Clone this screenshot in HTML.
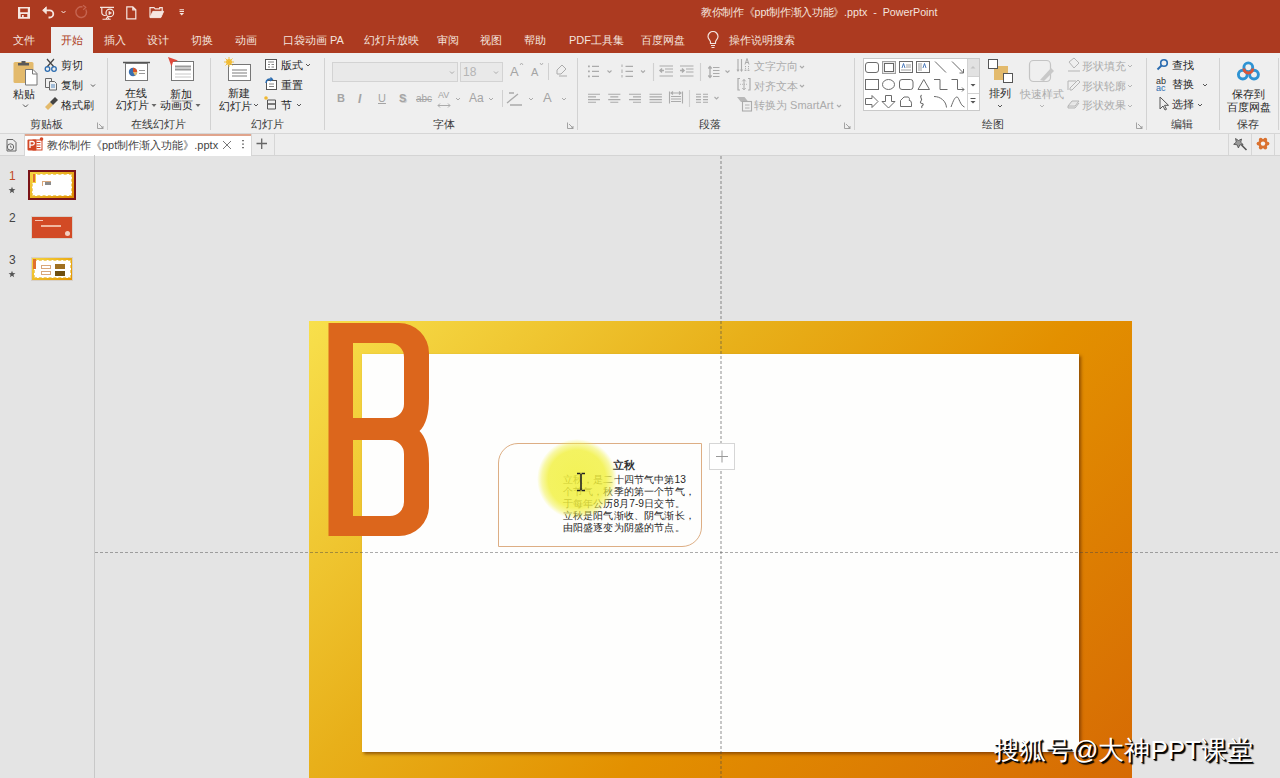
<!DOCTYPE html>
<html><head><meta charset="utf-8">
<style>
*{margin:0;padding:0;box-sizing:border-box}
html,body{width:1280px;height:778px;overflow:hidden;background:#E4E4E4;font-family:"Liberation Sans",sans-serif;position:relative}
.a{position:absolute}
.t{position:absolute;white-space:nowrap;line-height:1}
#title{left:0;top:0;width:1280px;height:53px;background:#AC3A20}
#ribbon{left:0;top:53px;width:1280px;height:81px;background:#EFEFEF;border-bottom:1px solid #D6D6D6}
#doctabs{left:0;top:134px;width:1280px;height:22px;background:#EDEDED;border-bottom:1px solid #D4D4D4}
.tab{color:#F4E3DE;font-size:11px;top:35px}
.sep{position:absolute;width:1px;background:#D2D2D2}
.gl{position:absolute;font-size:11px;color:#3A3A3A;top:119px;white-space:nowrap;line-height:1}
.rb{position:absolute;font-size:11px;color:#262626;white-space:nowrap;line-height:1}
.rb.dis{color:#ABABAB}
.k{display:inline-block;width:1em;text-align:center;text-indent:0}
</style></head>
<body>
<div id="title" class="a"></div>
<div id="ribbon" class="a"></div>
<div id="doctabs" class="a"></div>

<!-- active tab -->
<div class="a" style="left:51px;top:27px;width:42px;height:27px;background:#EFEFEF"></div>
<div class="t tab" style="left:13px"><span class="k">文</span><span class="k">件</span></div>
<div class="t tab" style="left:61px;color:#AC3A20"><span class="k">开</span><span class="k">始</span></div>
<div class="t tab" style="left:104px"><span class="k">插</span><span class="k">入</span></div>
<div class="t tab" style="left:147px"><span class="k">设</span><span class="k">计</span></div>
<div class="t tab" style="left:191px"><span class="k">切</span><span class="k">换</span></div>
<div class="t tab" style="left:235px"><span class="k">动</span><span class="k">画</span></div>
<div class="t tab" style="left:283px"><span class="k">口</span><span class="k">袋</span><span class="k">动</span><span class="k">画</span> PA</div>
<div class="t tab" style="left:364px"><span class="k">幻</span><span class="k">灯</span><span class="k">片</span><span class="k">放</span><span class="k">映</span></div>
<div class="t tab" style="left:437px"><span class="k">审</span><span class="k">阅</span></div>
<div class="t tab" style="left:480px"><span class="k">视</span><span class="k">图</span></div>
<div class="t tab" style="left:524px"><span class="k">帮</span><span class="k">助</span></div>
<div class="t tab" style="left:569px">PDF<span class="k">工</span><span class="k">具</span><span class="k">集</span></div>
<div class="t tab" style="left:641px"><span class="k">百</span><span class="k">度</span><span class="k">网</span><span class="k">盘</span></div>
<div class="t tab" style="left:729px"><span class="k">操</span><span class="k">作</span><span class="k">说</span><span class="k">明</span><span class="k">搜</span><span class="k">索</span></div>
<div class="t" style="left:701px;top:7px;font-size:10.7px;color:#F4E3DE"><span class="k">教</span><span class="k">你</span><span class="k">制</span><span class="k">作</span><span class="k">《</span>ppt<span class="k">制</span><span class="k">作</span><span class="k">渐</span><span class="k">入</span><span class="k">功</span><span class="k">能</span><span class="k">》</span>.pptx&nbsp;&nbsp;-&nbsp;&nbsp;PowerPoint</div>


<!-- QAT -->
<svg class="a" style="left:0;top:0" width="200" height="26" viewBox="0 0 200 26" fill="none" stroke="#F6E6E0" stroke-width="1.5">
 <path fill-rule="evenodd" fill="#F6E6E0" stroke="none" d="M18 6.9h12v11.8h-12z M20.2 8.6h7.6v3.7h-7.6z M20.7 14.1h6.6v2.9h-6.6z"/><rect x="22" y="15" width="1.7" height="2" fill="#F6E6E0" stroke="none"/>
 <path d="M42.6 10.3l3.7-3.5v7z" fill="#F6E6E0" stroke="#F6E6E0" stroke-width="0.8" stroke-linejoin="round"/><path d="M45.5 10.3h4.2a3.6 3.6 0 0 1 0 7.2h-1.2" stroke-width="1.8"/>
 <path d="M61.5 11l2 2 2-2" stroke-width="1"/>
 <path d="M85.8 9.5A5.3 5.3 0 1 1 82.5 7" stroke="#C56450" stroke-width="1.4"/><path d="M83 5.2l2.8 2.2-2.6 2.4" stroke="#C56450" stroke-width="1.2"/>
 <path d="M100 7.4h14" stroke-width="1.3"/><path d="M101.8 7.5v5a3 3 0 0 0 3 3h1" stroke-width="1.2"/><circle cx="109.8" cy="12.9" r="3.8" stroke-width="1.2"/><path d="M108.9 11.2v3.5l2.7-1.75z" fill="#F6E6E0" stroke-width="0.5"/><path d="M102.5 19.2h8.2M106 19l1.5-2 1.5 2" stroke-width="1.1"/>
 <path d="M126.8 6.8h6l3 3v9h-9z M132.8 6.8v3h3" stroke-width="1.2"/>
 <path d="M150 17.2v-9.5h4l1.2 1.2h4.5v-1.2h2.5v3.5" stroke-width="1.2"/><path d="M150 17.6l2.8-6.2h10.8l-2.8 6.2z" fill="#F6E6E0" stroke-width="1"/>
 <path d="M179.5 9.8h4.5M179.5 11.5h4.5" stroke-width="1.1"/><path d="M179.5 13h4.5l-2.25 2.5z" fill="#F6E6E0" stroke="none"/>
</svg>

<svg class="a" style="left:706px;top:31px" width="14" height="18" viewBox="0 0 14 18" fill="none" stroke="#F4E3DE" stroke-width="1.2"><path d="M4.5 12.5v-1.5c0-1.5-2.5-3-2.5-5.5a5 5 0 0 1 10 0c0 2.5-2.5 4-2.5 5.5v1.5z M5 14.5h4M5.5 16.5h3"/></svg>
<!-- ribbon group separators -->
<div class="sep" style="left:107px;top:58px;height:72px"></div>
<div class="sep" style="left:210px;top:58px;height:72px"></div>
<div class="sep" style="left:324px;top:58px;height:72px"></div>
<div class="sep" style="left:577px;top:58px;height:72px"></div>
<div class="sep" style="left:854px;top:58px;height:72px"></div>
<div class="sep" style="left:1146px;top:58px;height:72px"></div>
<div class="sep" style="left:1219px;top:58px;height:72px"></div>
<div class="sep" style="left:1278px;top:58px;height:72px"></div>


<!-- ribbon icons -->
<svg class="a" style="left:0;top:53px" width="1280" height="80" viewBox="0 53 1280 80" fill="none">
 <!-- paste -->
 <rect x="13.5" y="62" width="20" height="21" rx="1.5" fill="#E3BA6C"/>
 <path d="M18 65.5h11v-2.5h-3.5v-2h-4v2H18z" fill="#5A5A5A"/>
 <path d="M25.5 69.5h7.5l4 4v11.5h-11.5z" fill="#fff" stroke="#777" stroke-width="1"/>
 <path d="M32.5 69.5v4.5h4.5" stroke="#777" stroke-width="1"/>
 <path d="M23 104.5l2.5 2.5 2.5-2.5" stroke="#555" stroke-width="1"/>
 <!-- scissors -->
 <path d="M47 59l7 8M54 59l-7 8" stroke="#444" stroke-width="1.2"/>
 <circle cx="47.5" cy="69" r="2.3" stroke="#2B6CB0" stroke-width="1.3"/><circle cx="54" cy="69" r="2.3" stroke="#2B6CB0" stroke-width="1.3"/>
 <!-- copy -->
 <path d="M45.5 78.5h6v9h-6z" stroke="#666" stroke-width="1"/><path d="M49.5 81.5h5l2 2v6.5h-7z" fill="#F1F1F1" stroke="#666" stroke-width="1"/>
 <path d="M51 85h4M51 87h4" stroke="#2B6CB0" stroke-width="0.8"/>
 <path d="M91 84.5l2 2 2-2" stroke="#555" stroke-width="1"/>
 <!-- format painter -->
 <path d="M45 107l5-5 3 3-5 5z" fill="#E3BA6C"/><path d="M50 102l5-5 3 3-5 5z" fill="#444"/>
 <!-- online slide icon -->
 <path d="M123 62.5h27" stroke="#555" stroke-width="1.5"/>
 <rect x="125.5" y="63.5" width="22" height="17" fill="#fff" stroke="#777" stroke-width="1"/>
 <circle cx="133" cy="72" r="4.2" fill="#3B6FB0"/><path d="M133 72v-4.2a4.2 4.2 0 0 1 4.2 4.2z" fill="#D9532A"/><path d="M133 72h4.2a4.2 4.2 0 0 1-2.2 3.7z" fill="#E3BA6C"/>
 <path d="M139 70.5h6M139 73.5h6" stroke="#999" stroke-width="1"/>
 <!-- new animation page -->
 <rect x="171.5" y="61.5" width="22" height="19" fill="#fff" stroke="#777" stroke-width="1"/>
 <path d="M175 66.5h16M175 69.5h16" stroke="#9A9A9A" stroke-width="2"/><path d="M175 74h16M175 77h16" stroke="#C8C8C8" stroke-width="1"/>
 <path d="M168 57l10 3.5-5 1.5-1.5 4.5z" fill="#E0483A"/>
 <!-- new slide -->
 <rect x="228.5" y="64.5" width="22" height="16" fill="#fff" stroke="#777" stroke-width="1"/>
 <path d="M232 70h15M232 73h15M232 76h15" stroke="#A8A8A8" stroke-width="1.5"/>
 <circle cx="229" cy="62" r="3" fill="#F4C542"/><path d="M229 57v10M224 62h10M225.5 58.5l7 7M232.5 58.5l-7 7" stroke="#F0B830" stroke-width="0.9"/>
 <path d="M254 104l2 2 2-2" stroke="#555" stroke-width="1"/>
 <!-- layout -->
 <rect x="265.5" y="59.5" width="11" height="10" stroke="#555" stroke-width="1" fill="#fff"/><path d="M268 62h6M268 64.5h2M271.5 64.5h2.5M268 67h2M271.5 67h2.5" stroke="#777" stroke-width="0.9"/>
 <path d="M306 64l2 2 2-2" stroke="#555" stroke-width="1"/>
 <!-- reset -->
 <rect x="266.5" y="80.5" width="10" height="9" stroke="#555" stroke-width="1" fill="#fff"/><path d="M269 84h5M269 86.5h5" stroke="#777" stroke-width="0.9"/>
 <path d="M266 83a4 4 0 0 1 6-3.5" stroke="#2B6CB0" stroke-width="1.5"/><path d="M270.5 77.5l2 2-2.5 1.5" stroke="#2B6CB0" stroke-width="1.2"/>
 <!-- section -->
 <path d="M267.5 100h8v4h-8zM267.5 104h8v5h-8z" stroke="#555" stroke-width="1"/>
 <circle cx="266" cy="98" r="1.8" fill="#F0B830"/>
 <path d="M297 104l2 2 2-2" stroke="#555" stroke-width="1"/>
 <!-- launchers -->
 <g stroke="#9A9A9A" stroke-width="0.9"><path d="M97.5 122.5v6h6M99 124l4 4M101 128h2v-2"/>
 <path d="M567.5 122.5v6h6M569 124l4 4M571 128h2v-2"/>
 <path d="M844.5 122.5v6h6M846 124l4 4M848 128h2v-2"/>
 <path d="M1136.5 122.5v6h6M1138 124l4 4M1140 128h2v-2"/></g>
</svg>


<!-- font group -->
<div class="a" style="left:332px;top:62px;width:126px;height:20px;background:#E9E9E9;border:1px solid #D3D3D3"></div>
<div class="a" style="left:460px;top:62px;width:43px;height:20px;background:#E9E9E9;border:1px solid #D3D3D3"></div>
<div class="rb dis" style="left:463px;top:66px;font-size:12px;color:#B4B4B4">18</div>
<div class="rb dis" style="left:337px;top:93px;font-size:11px;font-weight:bold;color:#A4A4A4">B</div>
<div class="rb dis" style="left:358px;top:93px;font-size:12px;font-style:italic;font-weight:bold;color:#A4A4A4">I</div>
<div class="rb dis" style="left:378px;top:93px;font-size:11px;text-decoration:underline;color:#A4A4A4">U</div>
<div class="rb dis" style="left:399px;top:93px;font-size:11px;font-weight:bold;color:#A4A4A4;text-shadow:1px 1px 0 #CFCFCF">S</div>
<div class="rb dis" style="left:416px;top:94px;font-size:10px;color:#A4A4A4;text-decoration:line-through">abc</div>
<div class="rb dis" style="left:438px;top:91px;font-size:9px;color:#A4A4A4">AV</div>
<div class="rb dis" style="left:469px;top:92px;font-size:12px;color:#A4A4A4">Aa</div>
<div class="rb dis" style="left:543px;top:91px;font-size:13px;color:#A4A4A4">A</div>
<div class="rb dis" style="left:510px;top:65px;font-size:13px;color:#A4A4A4">A</div>
<div class="rb dis" style="left:531px;top:67px;font-size:11px;color:#A4A4A4">A</div>
<svg class="a" style="left:0;top:53px" width="1280" height="80" viewBox="0 53 1280 80" fill="none" stroke="#ABABAB" stroke-width="1">
 <path d="M450 71.5l2 2 2-2M494 71.5l2 2 2-2"/>
 <path d="M520 65l1.5-2 1.5 2M540 63l1.5 2 1.5-2" stroke-width="0.9"/>
 <path d="M548.5 63v17" stroke="#D0D0D0"/>
 <path d="M557 70l5-5 4 4-5 5h-4z M559 76h8" />
 <path d="M438 105.5h12M440 103.5l-2 2 2 2M448 103.5l2 2-2 2"/>
 <path d="M456 98l2 2 2-2M489 98l2 2 2-2M529 98l2 2 2-2M562 98l2 2 2-2"/>
 <path d="M502.5 90v17" stroke="#D0D0D0"/>
 <path d="M509 93h5M507 103l11-9M510 105h12" stroke-width="1.3"/>
</svg>
<!-- paragraph icons -->
<svg class="a" style="left:0;top:53px" width="1280" height="80" viewBox="0 53 1280 80" fill="none" stroke="#ABABAB" stroke-width="1.1">
 <path d="M588 66.3h1.8M588 71.3h1.8M588 76.3h1.8" stroke-width="1.8"/><path d="M592 66.3h7M592 71.3h7M592 76.3h7" stroke-width="1.3"/>
 <path d="M607.5 70.5l2 2 2-2M641 70.5l2 2 2-2M725.5 70.5l2 2 2-2M714.5 97l2 2 2-2"/>
 <path d="M622 64.5v2.5M622 69.5v3.5M622 75v2.5" stroke-width="1"/><path d="M625.5 66.3h7.5M625.5 71.3h7.5M625.5 76.3h7.5" stroke-width="1.3"/>
 <path d="M653.5 63v18M700.5 63v18M689.5 90v17" stroke="#D0D0D0"/>
 <path d="M659.5 66h13.5M665 69h8M665 72h8M659.5 76h13.5" stroke-width="1.2"/><path d="M660 70.5h4M662 68.5l-2 2 2 2" stroke-width="1.5"/>
 <path d="M680 66h13.5M686 69h7.5M686 72h7.5M680 76h13.5" stroke-width="1.2"/><path d="M680 70.5h4M682 68.5l2 2-2 2" stroke-width="1.5"/>
 <path d="M710 67v10M708.3 68.5l1.7-2 1.7 2M708.3 75.5l1.7 2 1.7-2" stroke-width="1.3"/><path d="M713 67.5h6.5M713 70.5h6.5M713 73.5h6.5M713 76.5h6.5" stroke-width="1.1"/>
 <path d="M588 94.2h12M588 96.9h8M588 99.6h12M588 102.3h8"/>
 <path d="M608.2 94.2h12.2M610.3 96.9h8M608.2 99.6h12.2M610.3 102.3h8"/>
 <path d="M629 94.2h12M633 96.9h8M629 99.6h12M633 102.3h8"/>
 <path d="M649.5 94.2h12.4M649.5 96.9h12.4M649.5 99.6h12.4M649.5 102.3h12.4"/>
 <path d="M669.5 91.5v12M682.5 91.5v12M671 93h10M673 91.5l-2 1.5 2 1.5M679 91.5l2 1.5-2 1.5M671 96.5h10M671 99h10M671 101.5h10" stroke-width="1.1"/>
 <path d="M696 94.2h5M696 96.9h5M696 99.6h5M696 102.3h5M703 94.2h5M703 96.9h5M703 99.6h5M703 102.3h5"/>
 <path d="M738 59v12M741.5 59v12M737 69.5l1 1.5 1-1.5M740.5 69.5l1 1.5 1-1.5" stroke-width="1.1"/>
 <path d="M745 64.5l2-6 2 6M745.7 62.5h2.6" stroke-width="1"/><path d="M745.5 66v5M748.5 66v5" stroke-width="1" stroke-dasharray="1.2 1"/><path d="M744.5 69.8l1 1.2 1-1.2M747.5 69.8l1 1.2 1-1.2" stroke-width="0.9"/>
 <path d="M740 78.5h-2v11.5h2M748 78.5h2v11.5h-2" stroke-width="1.2"/><path d="M744 79.5v10M742.3 81.3l1.7-1.8 1.7 1.8M742.3 88l1.7 1.8 1.7-1.8" stroke-width="1"/><path d="M740 84.3h8" stroke-width="0.8" stroke-dasharray="1 1"/>
 <path d="M737 97h7.5l4 5h-7.5z" fill="#B8B8B8" stroke="none"/><rect x="742.5" y="101.5" width="9" height="9.5" fill="#EFEFEF" stroke-width="1.1"/><path d="M745 105h4.5M745 108h4.5" stroke-width="0.9"/>
 <path d="M800 66l2 2 2-2M800 85l2 2 2-2M837 105l2 2 2-2"/>
</svg>
<!-- drawing group -->
<div class="a" style="left:863px;top:58px;width:117px;height:53px;background:#fff;border:1px solid #C9C9C9"></div>
<div class="a" style="left:967px;top:59px;width:12px;height:17px;background:#E2E2E2;border-left:1px solid #D2D2D2"></div>
<div class="a" style="left:967px;top:76px;width:12px;height:17px;border-left:1px solid #D2D2D2;border-top:1px solid #D2D2D2"></div>
<div class="a" style="left:967px;top:93px;width:12px;height:17px;border-left:1px solid #D2D2D2;border-top:1px solid #D2D2D2"></div>
<svg class="a" style="left:0;top:53px" width="1280" height="80" viewBox="0 53 1280 80" fill="none" stroke="#6B6B6B" stroke-width="1">
 <rect x="865.5" y="62.5" width="13" height="10" rx="2.5"/>
 <rect x="882.5" y="61.5" width="13" height="12" fill="#E8E8E8" stroke="#A0A0A0"/><rect x="884.5" y="63.5" width="9" height="8" fill="#fff" stroke="#666"/>
 <rect x="899.5" y="61.5" width="13" height="11"/><path d="M902 68l1.5-4.5 1.5 4.5" stroke="#3A6DB5" stroke-width="0.9"/><path d="M906 65h5M906 67h5M901 70h10" stroke="#888" stroke-width="0.8"/>
 <rect x="916.5" y="61.5" width="13" height="11"/><path d="M919 63v8M921 63v8" stroke="#888" stroke-width="0.8"/><path d="M923 68l1.5-4.5 1.5 4.5" stroke="#3A6DB5" stroke-width="0.9"/>
 <path d="M935 61.5l11 11M952 61.5l11.5 11.5M963.5 69v4h-4"/>
 <rect x="865.5" y="79.5" width="13" height="10"/>
 <ellipse cx="888.5" cy="84.5" rx="6" ry="5"/>
 <rect x="899.5" y="79.5" width="13.5" height="10" rx="2.5"/>
 <path d="M918 89.5h11.5l-5.75-10z"/>
 <path d="M934 79.5h6v10h7.5"/>
 <path d="M951.5 79.5h6v10h6.5M962 87.5l2 2-2 2"/>
 <path d="M865.5 98.5h6.5v-3l6 6-6 6v-3h-6.5z"/>
 <path d="M885.5 95.5h6v6h3.5l-6.5 6.5-6.5-6.5h3.5z"/>
 <path d="M900.5 106.5v-6l3.5-3.5h4a2 2 0 0 1 1 3.2 3 3 0 0 1 2.5 3v3.3z"/>
 <path d="M921.5 95c-3 3 2 3-.5 6s3.5 2 2 4-2 1-1 3" stroke-width="1.1"/>
 <path d="M934 96.5c6.5 0 12 4.5 12.5 11"/>
 <path d="M951 107c2.5-7 4-10 6-10s3 8.5 7.5 10"/>
 <path d="M970.5 68.5h5l-2.5-2.5z" fill="#C4C4C4" stroke="none"/>
 <path d="M970.5 84h5l-2.5 2.5z" fill="#555" stroke="none"/>
 <path d="M970.5 98.5h5" stroke="#555"/><path d="M970.5 101h5l-2.5 2.5z" fill="#555" stroke="none"/>
 <!-- arrange -->
 <rect x="994" y="66" width="14" height="14" fill="#E3BA6C" stroke="none"/>
 <rect x="988.5" y="59.5" width="9" height="9" fill="#fff" stroke="#555"/>
 <rect x="1003.5" y="73.5" width="9" height="9" fill="#fff" stroke="#555"/>
 <path d="M998 105l2 2 2-2" stroke="#555"/>
 <!-- quick styles -->
 <rect x="1029.5" y="60.5" width="21" height="21" rx="4" stroke="#C4C4C4" stroke-width="1.2"/>
 <path d="M1040 80l11-12 3 3-10 10z" fill="#C8C8C8" stroke="none"/>
 <path d="M1040 105l2 2 2-2" stroke="#B5B5B5"/>
 <!-- shape fill etc -->
 <path d="M1069 62l5-4 5 5-5 5zM1068 71h12" stroke="#B5B5B5"/>
 <path d="M1068 90v-9h8M1070 88l8-8 2 2-8 8h-2z" stroke="#B5B5B5"/>
 <path d="M1068 106l4-5h7l-4 5zM1068 106v2h7l4-5" stroke="#B5B5B5" fill="#E6E6E6"/>
 <path d="M1128 65l2 2 2-2M1128 85l2 2 2-2M1128 105l2 2 2-2" stroke="#B5B5B5"/>
 <!-- editing -->
 <circle cx="1164" cy="63" r="3.3" stroke="#2B6CB0" stroke-width="1.6"/><path d="M1161.5 65.5l-4 4" stroke="#2B6CB0" stroke-width="2"/>
 <path d="M1203 84l2 2 2-2M1198 104l2 2 2-2" stroke="#555"/>
 <path d="M1160 97v12l3-3 2 4 1.5-.7-2-4h4z" stroke="#555"/>
 <!-- baidu -->
 <circle cx="1248.3" cy="67.3" r="4.4" stroke="#2E93D3" stroke-width="2.9"/>
 <circle cx="1242.8" cy="74.6" r="4.4" stroke="#2E93D3" stroke-width="2.9"/>
 <circle cx="1254" cy="74.6" r="4.4" stroke="#2E93D3" stroke-width="2.9"/>
 <path d="M1243.9 68.5a4.4 4.4 0 0 0 8.8 0" stroke="#D9573A" stroke-width="3"/>
</svg>
<div class="rb" style="left:1156px;top:78px;font-size:9px;color:#333;line-height:0.8">ab<br><span style="color:#2B6CB0">ac</span></div>

<!-- group labels -->
<div class="gl" style="left:30px"><span class="k">剪</span><span class="k">贴</span><span class="k">板</span></div>
<div class="gl" style="left:131px"><span class="k">在</span><span class="k">线</span><span class="k">幻</span><span class="k">灯</span><span class="k">片</span></div>
<div class="gl" style="left:251px"><span class="k">幻</span><span class="k">灯</span><span class="k">片</span></div>
<div class="gl" style="left:433px"><span class="k">字</span><span class="k">体</span></div>
<div class="gl" style="left:699px"><span class="k">段</span><span class="k">落</span></div>
<div class="gl" style="left:982px"><span class="k">绘</span><span class="k">图</span></div>
<div class="gl" style="left:1171px"><span class="k">编</span><span class="k">辑</span></div>
<div class="gl" style="left:1237px"><span class="k">保</span><span class="k">存</span></div>

<!-- clipboard -->
<div class="rb" style="left:13px;top:89px"><span class="k">粘</span><span class="k">贴</span></div>
<div class="rb" style="left:61px;top:60px"><span class="k">剪</span><span class="k">切</span></div>
<div class="rb" style="left:61px;top:80px"><span class="k">复</span><span class="k">制</span></div>
<div class="rb" style="left:61px;top:100px"><span class="k">格</span><span class="k">式</span><span class="k">刷</span></div>
<!-- online slides -->
<div class="rb" style="left:125px;top:88px"><span class="k">在</span><span class="k">线</span></div>
<div class="rb" style="left:116px;top:100px"><span class="k">幻</span><span class="k">灯</span><span class="k">片</span></div>
<div class="rb" style="left:170px;top:89px"><span class="k">新</span><span class="k">加</span></div>
<div class="rb" style="left:160px;top:100px"><span class="k">动</span><span class="k">画</span><span class="k">页</span></div>
<svg class="a" style="left:0;top:0" width="210" height="120"><path d="M151.5 104h5l-2.5 3z M195.5 104h5l-2.5 3z" fill="#6A6A6A"/></svg>
<!-- slides -->
<div class="rb" style="left:228px;top:88px"><span class="k">新</span><span class="k">建</span></div>
<div class="rb" style="left:219px;top:101px"><span class="k">幻</span><span class="k">灯</span><span class="k">片</span></div>
<div class="rb" style="left:281px;top:60px"><span class="k">版</span><span class="k">式</span></div>
<div class="rb" style="left:281px;top:80px"><span class="k">重</span><span class="k">置</span></div>
<div class="rb" style="left:281px;top:100px"><span class="k">节</span></div>
<!-- paragraph -->
<div class="rb dis" style="left:754px;top:61px"><span class="k">文</span><span class="k">字</span><span class="k">方</span><span class="k">向</span></div>
<div class="rb dis" style="left:754px;top:81px"><span class="k">对</span><span class="k">齐</span><span class="k">文</span><span class="k">本</span></div>
<div class="rb dis" style="left:754px;top:100px"><span class="k">转</span><span class="k">换</span><span class="k">为</span> SmartArt</div>
<!-- drawing -->
<div class="rb" style="left:989px;top:88px"><span class="k">排</span><span class="k">列</span></div>
<div class="rb dis" style="left:1020px;top:89px"><span class="k">快</span><span class="k">速</span><span class="k">样</span><span class="k">式</span></div>
<div class="rb dis" style="left:1082px;top:61px"><span class="k">形</span><span class="k">状</span><span class="k">填</span><span class="k">充</span></div>
<div class="rb dis" style="left:1082px;top:81px"><span class="k">形</span><span class="k">状</span><span class="k">轮</span><span class="k">廓</span></div>
<div class="rb dis" style="left:1082px;top:100px"><span class="k">形</span><span class="k">状</span><span class="k">效</span><span class="k">果</span></div>
<!-- editing -->
<div class="rb" style="left:1172px;top:60px"><span class="k">查</span><span class="k">找</span></div>
<div class="rb" style="left:1172px;top:79px"><span class="k">替</span><span class="k">换</span></div>
<div class="rb" style="left:1172px;top:99px"><span class="k">选</span><span class="k">择</span></div>
<div class="rb" style="left:1232px;top:89px"><span class="k">保</span><span class="k">存</span><span class="k">到</span></div>
<div class="rb" style="left:1227px;top:102px"><span class="k">百</span><span class="k">度</span><span class="k">网</span><span class="k">盘</span></div>


<!-- doc tab bar -->
<div class="a" style="left:25px;top:134px;width:226px;height:22px;background:#FFFFFF;border-top:2px solid #E0A48C"></div>
<div class="sep" style="left:24px;top:134px;height:21px;background:#D6D6D6"></div>
<div class="sep" style="left:251px;top:134px;height:21px;background:#D6D6D6"></div>
<div class="sep" style="left:274px;top:134px;height:21px;background:#D6D6D6"></div>
<div class="sep" style="left:1228px;top:134px;height:21px;background:#D6D6D6"></div>
<div class="sep" style="left:1251px;top:134px;height:21px;background:#D6D6D6"></div>
<div class="sep" style="left:1274px;top:134px;height:21px;background:#D6D6D6"></div>
<div class="t" style="left:47px;top:140px;font-size:11px;color:#444"><span class="k">教</span><span class="k">你</span><span class="k">制</span><span class="k">作</span><span class="k">《</span>ppt<span class="k">制</span><span class="k">作</span><span class="k">渐</span><span class="k">入</span><span class="k">功</span><span class="k">能</span><span class="k">》</span>.pptx</div>
<svg class="a" style="left:0;top:133px" width="1280" height="22" viewBox="0 133 1280 22" fill="none">
 <path d="M7 139.5h6l3 3v8.5h-9z" stroke="#666" stroke-width="1"/><circle cx="10.5" cy="147" r="3.2" stroke="#666" fill="#EDEDED"/><path d="M10.5 145.5v1.7h1.5" stroke="#666" stroke-width=".8"/>
 <rect x="33" y="140" width="9" height="10" fill="#fff" stroke="#D24726" stroke-width="1"/><path d="M36.5 142.5h4M36.5 145h4M36.5 147.5h4" stroke="#D24726" stroke-width="1"/>
 <rect x="27.5" y="139.5" width="9" height="11" rx="1" fill="#D24726"/>
 <path d="M30 148v-6.5h2.5a1.8 1.8 0 0 1 0 3.6H30" stroke="#fff" stroke-width="1.3"/>
 <circle cx="41.5" cy="139" r="1.8" fill="#D24726"/>
 <path d="M223 141l8 8M231 141l-8 8" stroke="#777" stroke-width="1"/>
 <path d="M243 140v1.2M243 143.5v1.2M243 147v1.2" stroke="#555" stroke-width="1.6"/>
 <path d="M256.5 143.5h10.5M261.7 138.5v10.5" stroke="#666" stroke-width="1.3"/>
 <path d="M1235.5 138.5l3 2 3-1.5-.8 3.3 2.5 2.3-3.4.3-1.4 3.1-1.3-3.2-3.4-.5 2.6-2.2z" fill="#9A9A9A" stroke="#555" stroke-width=".9"/><path d="M1241.5 145l5 5" stroke="#555" stroke-width="1.6"/>
 <circle cx="1263" cy="143.6" r="4.7" fill="#DA7230"/><circle cx="1267.50" cy="143.60" r="1.9" fill="#DA7230"/><circle cx="1265.25" cy="147.50" r="1.9" fill="#DA7230"/><circle cx="1260.75" cy="147.50" r="1.9" fill="#DA7230"/><circle cx="1258.50" cy="143.60" r="1.9" fill="#DA7230"/><circle cx="1260.75" cy="139.70" r="1.9" fill="#DA7230"/><circle cx="1265.25" cy="139.70" r="1.9" fill="#DA7230"/><circle cx="1263" cy="143.6" r="2.2" fill="#F4F4F4"/>
</svg>

<!-- slide panel -->
<div class="t" style="left:9px;top:170px;font-size:12px;color:#C24A26">1</div>
<div class="t" style="left:9px;top:212px;font-size:12px;color:#444">2</div>
<div class="t" style="left:9px;top:254px;font-size:12px;color:#444">3</div>
<svg class="a" style="left:0;top:0" width="30" height="290"><polygon points="12.00,186.70 12.88,189.09 15.42,189.19 13.43,190.76 14.12,193.21 12.00,191.80 9.88,193.21 10.57,190.76 8.58,189.19 11.12,189.09" fill="#555"/><polygon points="12.00,270.70 12.88,273.09 15.42,273.19 13.43,274.76 14.12,277.21 12.00,275.80 9.88,277.21 10.57,274.76 8.58,273.19 11.12,273.09" fill="#555"/></svg>
<div class="a" style="left:28px;top:170px;width:48px;height:30px;border:2px solid #7A1418;background:linear-gradient(135deg,#F5D540,#E08A00)"></div>
<div class="a" style="left:32px;top:174px;width:40px;height:22px;background:#fff;border:1px dashed #F0D070"></div>
<div class="a" style="left:32px;top:173px;width:4px;height:10px;background:#E07030;border:1px solid #F5D540"></div>
<div class="a" style="left:42px;top:181px;width:9px;height:5px;border-left:1px solid #D9A77A;border-top:1px solid #D9A77A"></div>
<div class="a" style="left:45px;top:182px;width:6px;height:3px;background:#8a8a8a"></div>
<div class="a" style="left:31px;top:216px;width:42px;height:23px;background:#D24A25;border:1px solid #D8D0C8"></div>
<div class="a" style="left:35px;top:220px;width:8px;height:1px;background:#F6C8B8"></div>
<div class="a" style="left:41px;top:225px;width:20px;height:2px;background:#F0B8A0"></div>
<div class="a" style="left:65px;top:231px;width:5px;height:5px;border-radius:50%;background:#F4D0C0"></div>
<div class="a" style="left:31px;top:257px;width:42px;height:24px;background:linear-gradient(135deg,#F5D540,#E59500);border:1px solid #D8D0C8"></div>
<div class="a" style="left:34px;top:260px;width:37px;height:18px;background:#fff;border:1px dashed #F0D070"></div>
<div class="a" style="left:33px;top:259px;width:3px;height:10px;background:#E07030"></div>
<div class="a" style="left:41px;top:265px;width:10px;height:4px;border:1px solid #D9A77A"></div>
<div class="a" style="left:41px;top:271px;width:10px;height:4px;border:1px solid #D9A77A"></div>
<div class="a" style="left:55px;top:264px;width:10px;height:5px;background:#A07020"></div>
<div class="a" style="left:55px;top:271px;width:10px;height:5px;background:#705010"></div>
<!-- main -->
<div class="sep" style="left:94px;top:155px;height:623px;background:#C8C8C8"></div>

<!-- slide -->
<div class="a" style="left:309px;top:321px;width:823px;height:457px;background:linear-gradient(135deg,#F8E04C 0%,#E8B01A 35%,#E39000 60%,#D66A04 100%)"></div>
<div class="a" style="left:362px;top:354px;width:717px;height:398px;background:#FEFEFD;box-shadow:2px 2px 3px rgba(90,35,0,.6)"></div>


<!-- B letter -->
<svg class="a" style="left:0;top:0" width="1280" height="778" viewBox="0 0 1280 778">
 <path fill="#DC661C" fill-rule="evenodd" d="M328.5 323H399a30 30 0 0 1 30 30V398Q429 422 419.5 431Q429 440 429 464V506a30 30 0 0 1-30 30H328.5z
  M353 343V418H390a14 14 0 0 0 14-14V357a14 14 0 0 0-14-14z
  M353 440V516H390a14 14 0 0 0 14-14V454a14 14 0 0 0-14-14z"/>
</svg>
<!-- textbox -->
<div class="a" style="left:498px;top:443px;width:204px;height:104px;border:1.5px solid #DDAE84;border-radius:20px 0 20px 0;background:#FEFEFD"></div>
<div class="t" style="left:613px;top:460px;font-size:11px;font-weight:bold;color:#333"><span class="k">立</span><span class="k">秋</span></div>
<div class="a" style="left:562.5px;top:474px;font-size:10.2px;line-height:12.1px;color:#262626;white-space:nowrap"><span class="k">立</span><span class="k">秋</span><span class="k">，</span><span class="k">是</span><span class="k">二</span><span class="k">十</span><span class="k">四</span><span class="k">节</span><span class="k">气</span><span class="k">中</span><span class="k">第</span>13<br><span class="k">个</span><span class="k">节</span><span class="k">气</span><span class="k">，</span><span class="k">秋</span><span class="k">季</span><span class="k">的</span><span class="k">第</span><span class="k">一</span><span class="k">个</span><span class="k">节</span><span class="k">气</span><span class="k">，</span><br><span class="k">于</span><span class="k">每</span><span class="k">年</span><span class="k">公</span><span class="k">历</span>8<span class="k">月</span>7-9<span class="k">日</span><span class="k">交</span><span class="k">节</span><span class="k">。</span><br><span class="k">立</span><span class="k">秋</span><span class="k">是</span><span class="k">阳</span><span class="k">气</span><span class="k">渐</span><span class="k">收</span><span class="k">、</span><span class="k">阴</span><span class="k">气</span><span class="k">渐</span><span class="k">长</span><span class="k">，</span><br><span class="k">由</span><span class="k">阳</span><span class="k">盛</span><span class="k">逐</span><span class="k">变</span><span class="k">为</span><span class="k">阴</span><span class="k">盛</span><span class="k">的</span><span class="k">节</span><span class="k">点</span><span class="k">。</span></div>
<div class="a" style="left:537px;top:439px;width:80px;height:80px;border-radius:50%;background:radial-gradient(circle closest-side,rgba(241,240,58,.85) 0%,rgba(241,240,58,.8) 72%,rgba(241,240,58,.45) 88%,rgba(241,240,58,0) 100%)"></div>
<svg class="a" style="left:575px;top:472px" width="12" height="20" viewBox="0 0 12 20"><path d="M2 1.5h3.5M6.5 1.5H10M6 2v16M2 18.5h3.5M6.5 18.5H10" stroke="#222" stroke-width="1.6" fill="none"/></svg>
<!-- guides -->
<div class="a" style="left:720px;top:156px;width:2px;height:622px;background:repeating-linear-gradient(to bottom,rgba(70,70,70,.3) 0 3px,transparent 3px 5px)"></div>
<div class="a" style="left:95px;top:552px;width:1185px;height:1px;background:repeating-linear-gradient(to right,rgba(70,70,70,.45) 0 3px,transparent 3px 5px)"></div>
<div class="a" style="left:709px;top:443px;width:26px;height:27px;background:#fff;border:1px solid #D6D6D6"></div>
<svg class="a" style="left:709px;top:443px" width="26" height="27"><path d="M7 13.5h12M13 7.5v12" stroke="#999" stroke-width="1"/></svg>
<!-- watermark -->
<div class="t" style="left:994px;top:737px;font-size:26px;color:#fff;text-shadow:2px 2px 1px #000,1px 1px 0 #000"><span class="k">搜</span><span class="k">狐</span><span class="k">号</span>@<span class="k">大</span><span class="k">神</span>PPT<span class="k">课</span><span class="k">堂</span></div>

</body></html>
